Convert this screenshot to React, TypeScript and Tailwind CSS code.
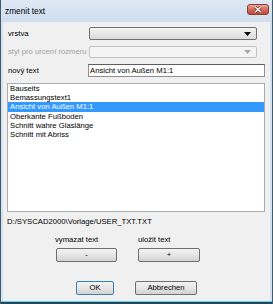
import React from 'react';

const items = [
  'Bauseits',
  'Bemassungstext1',
  'Ansicht von Außen M1:1',
  'Oberkante Fußboden',
  'Schnitt wahre Glaslänge',
  'Schnitt mit Abriss',
];

function Arrow({ disabled }: { disabled?: boolean }) {
  return (
    <svg width="7" height="4" viewBox="0 0 7 4" className="mr-[5px]">
      <path d="M0 0h7L3.5 4z" fill={disabled ? '#a8a8a8' : '#000'} />
    </svg>
  );
}

function WinButton({ label, focused, w }: { label: string; focused?: boolean; w: string }) {
  return (
    <div
      className={`${w} h-[14px] flex items-center justify-center rounded-[2px] border bg-gradient-to-b from-[#f3f3f3] via-[#e6e6e6] to-[#d2d2d2] ${
        focused ? 'border-[#3c7fb1]' : 'border-[#707070]'
      }`}
    >
      {label}
    </div>
  );
}

export default function App() {
  return (
    <div
      className="w-[273px] h-[304px] flex flex-col bg-[#d3e1f0] border-l border-r border-[#3f5a6b] text-black text-[7.7px]"
      style={{ fontFamily: '"Liberation Sans", Arial, sans-serif' }}
    >
      {/* Title bar */}
      <div className="h-[22px] shrink-0 flex items-start bg-gradient-to-b from-[#dfe9f5] to-[#cfdeef]">
        <span className="ml-[4px] mt-[6px] text-[8.3px] leading-[10px]">zmenit text</span>
        <div className="ml-auto mr-[3px] mt-[4px] w-[22px] h-[11px] rounded-[3px] border border-[#8a3b32] bg-gradient-to-b from-[#e9a99c] via-[#d2695a] to-[#c24a3a] flex items-center justify-center">
          <svg width="8" height="7" viewBox="0 0 8 7">
            <path d="M1 0.8L7 6.2M7 0.8L1 6.2" stroke="#5a1e18" strokeWidth="2.6" />
            <path d="M1 0.8L7 6.2M7 0.8L1 6.2" stroke="#fff" strokeWidth="1.5" />
          </svg>
        </div>
      </div>

      {/* Client area */}
      <div className="flex-1 mx-[2px] bg-[#f0f0f0] flex flex-col pl-[4px]">
        <div className="mt-[5px] flex items-center h-[13px]">
          <span className="ml-px w-[81px]">vrstva</span>
          <div className="w-[168px] h-[13px] rounded-[2px] border border-[#707070] bg-gradient-to-b from-[#f4f4f4] to-[#dadada] flex items-center justify-end">
            <Arrow />
          </div>
        </div>

        <div className="mt-[6px] flex items-center h-[12px]">
          <span className="ml-px w-[81px] text-[#a3a3a3]">styl pro urcení rozmeru</span>
          <div className="w-[168px] h-[12px] rounded-[2px] border border-[#c2c5c8] bg-[#f4f4f4] flex items-center justify-end">
            <Arrow disabled />
          </div>
        </div>

        <div className="mt-[6px] flex items-center h-[13px]">
          <span className="ml-px w-[80px]">nový text</span>
          <div className="w-[177px] h-[13px] border border-[#8f8f8f] border-t-[#5e5e5e] bg-white flex items-center pl-[1px] leading-[9px]">
            Ansicht von Außen M1:1
          </div>
        </div>

        <div className="mt-[6px] w-[258px] h-[129px] border border-[#a9adb3] bg-white flex flex-col">
          {items.map((t, i) => (
            <div
              key={t}
              className={`leading-[9.2px] pl-[2px] ${i === 2 ? 'bg-[#3399ff] text-white' : ''}`}
            >
              {t}
            </div>
          ))}
        </div>

        <div className="mt-[5px] leading-[9px]">D:/SYSCAD2000\Vorlage/USER_TXT.TXT</div>

        <div className="mt-[9px] flex leading-[9px]">
          <span className="ml-[48px] w-[83px]">vymazat text</span>
          <span>uložit text</span>
        </div>

        <div className="mt-[4px] flex">
          <div className="ml-[49px] w-[82px]">
            <WinButton label="-" w="w-[61px]" />
          </div>
          <WinButton label="+" w="w-[62px]" />
        </div>

        <div className="mt-[19px] flex">
          <div className="ml-[69px] w-[59px]">
            <WinButton label="OK" focused w="w-[38px]" />
          </div>
          <WinButton label="Abbrechen" w="w-[62px]" />
        </div>
      </div>

      {/* Bottom frame */}
      <div className="h-px shrink-0 bg-[#6ccbe9]" />
      <div className="h-[2px] shrink-0 bg-[#1f4a5c]" />
    </div>
  );
}
